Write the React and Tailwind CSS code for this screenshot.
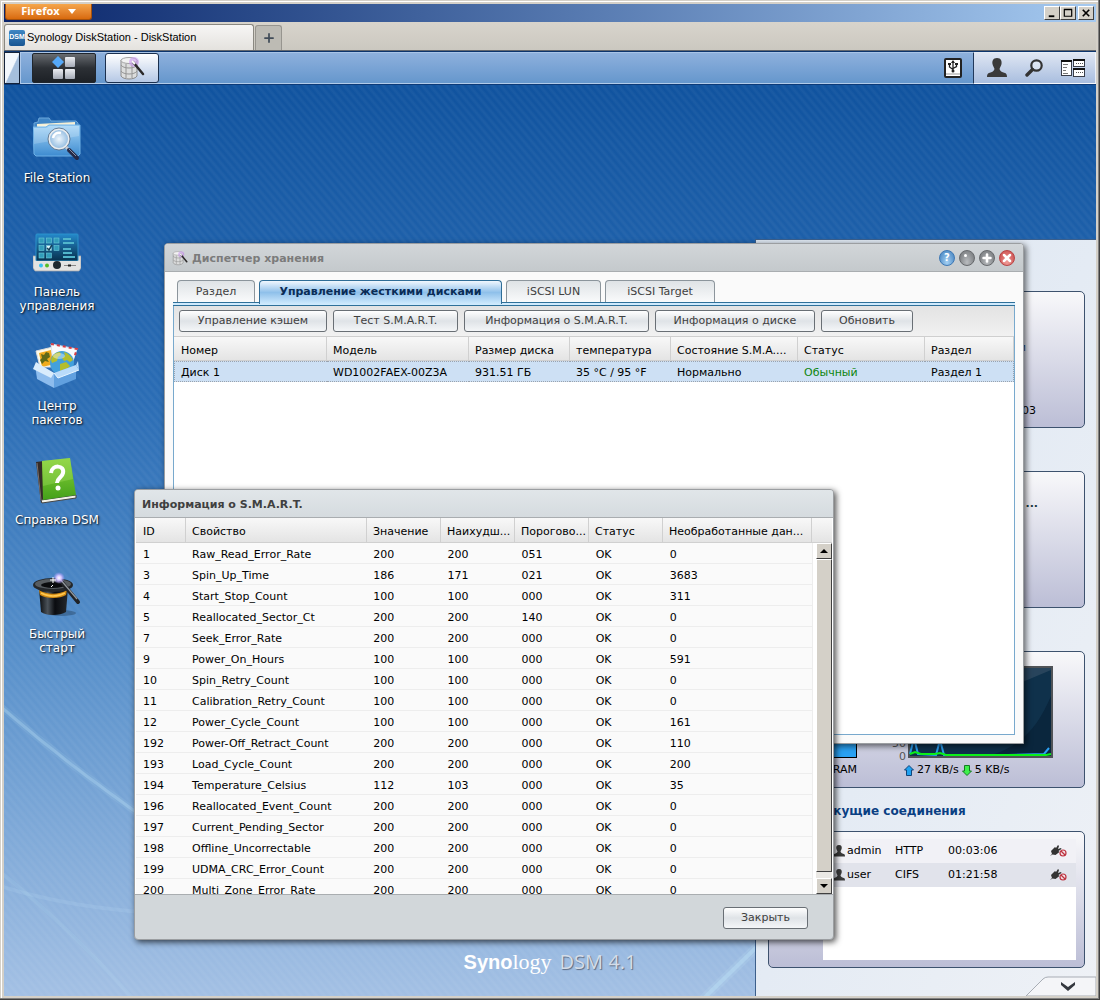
import React from 'react';
import { Plus, X } from 'lucide-react';

const apps = [
  { label: ['File Station'], icon: 'folder' },
  { label: ['Панель', 'управления'], icon: 'panel' },
  { label: ['Центр', 'пакетов'], icon: 'package' },
  { label: ['Справка DSM'], icon: 'help' },
  { label: ['Быстрый', 'старт'], icon: 'hat' },
];

const tabs = [
  { label: 'Раздел', width: 'w-[78px]' },
  { label: 'Управление жесткими дисками', width: 'w-[243px]', active: true },
  { label: 'iSCSI LUN', width: 'w-[95px]' },
  { label: 'iSCSI Target', width: 'w-[110px]' },
];

const actions = [
  { label: 'Управление кэшем', width: 'w-[148px]' },
  { label: 'Тест S.M.A.R.T.', width: 'w-[125px]' },
  { label: 'Информация о S.M.A.R.T.', width: 'w-[185px]' },
  { label: 'Информация о диске', width: 'w-[160px]' },
  { label: 'Обновить', width: 'w-[92px]' },
];

const diskColumns = [
  { label: 'Номер', width: 'w-[153px]' },
  { label: 'Модель', width: 'w-[142px]' },
  { label: 'Размер диска', width: 'w-[101px]' },
  { label: 'температура', width: 'w-[101px]' },
  { label: 'Состояние S.M.A....', width: 'w-[127px]' },
  { label: 'Статус', width: 'w-[127px]' },
  { label: 'Раздел', width: 'w-[89px]' },
];

const disk = ['Диск 1', 'WD1002FAEX-00Z3A', '931.51 ГБ', '35 °C / 95 °F', 'Нормально', 'Обычный', 'Раздел 1'];

const smartColumns = [
  { label: 'ID', width: 'w-[50px]' },
  { label: 'Свойство', width: 'w-[181px]' },
  { label: 'Значение', width: 'w-[74px]' },
  { label: 'Наихудш...', width: 'w-[74px]' },
  { label: 'Порогово...', width: 'w-[74px]' },
  { label: 'Статус', width: 'w-[74px]' },
  { label: 'Необработанные дан...', width: 'w-[149px]' },
];

const smartRows = [
  ['1', 'Raw_Read_Error_Rate', '200', '200', '051', 'OK', '0'],
  ['3', 'Spin_Up_Time', '186', '171', '021', 'OK', '3683'],
  ['4', 'Start_Stop_Count', '100', '100', '000', 'OK', '311'],
  ['5', 'Reallocated_Sector_Ct', '200', '200', '140', 'OK', '0'],
  ['7', 'Seek_Error_Rate', '200', '200', '000', 'OK', '0'],
  ['9', 'Power_On_Hours', '100', '100', '000', 'OK', '591'],
  ['10', 'Spin_Retry_Count', '100', '100', '000', 'OK', '0'],
  ['11', 'Calibration_Retry_Count', '100', '100', '000', 'OK', '0'],
  ['12', 'Power_Cycle_Count', '100', '100', '000', 'OK', '161'],
  ['192', 'Power-Off_Retract_Count', '200', '200', '000', 'OK', '110'],
  ['193', 'Load_Cycle_Count', '200', '200', '000', 'OK', '200'],
  ['194', 'Temperature_Celsius', '112', '103', '000', 'OK', '35'],
  ['196', 'Reallocated_Event_Count', '200', '200', '000', 'OK', '0'],
  ['197', 'Current_Pending_Sector', '200', '200', '000', 'OK', '0'],
  ['198', 'Offline_Uncorrectable', '200', '200', '000', 'OK', '0'],
  ['199', 'UDMA_CRC_Error_Count', '200', '200', '000', 'OK', '0'],
  ['200', 'Multi_Zone_Error_Rate', '200', '200', '000', 'OK', '0'],
];

const connections = [
  { user: 'admin', type: 'HTTP', time: '00:03:06' },
  { user: 'user', type: 'CIFS', time: '01:21:58' },
];

const FolderIcon = () => (
  <svg viewBox="0 0 48 48" className="size-12">
    <defs>
      <linearGradient id="folder" x1="0" y1="0" x2="0" y2="1">
        <stop offset="0" stopColor="#a6d6f8" />
        <stop offset="1" stopColor="#3d8bd0" />
      </linearGradient>
      <radialGradient id="lens">
        <stop offset="0" stopColor="#eef6fc" />
        <stop offset="1" stopColor="#8fbae0" />
      </radialGradient>
    </defs>
    <path d="M1 13V8l4-1 1-4h10l2 3h25l2 2v6H1z" fill="#4186c6" stroke="#6aa6da" />
    <path d="M4 9l38-2v6H4z" fill="#f6f0d5" />
    <path d="M5 11l37-2v4H5z" fill="#fffdf0" />
    <path d="M0 12h13l3-2h31v29l-2 2H3l-2-2z" fill="url(#folder)" stroke="#6eb1e6" />
    <path d="M1 13h13l3-2h29v10L1 29z" fill="#fff" opacity=".18" />
    <circle cx="26" cy="24" r="10" fill="url(#lens)" stroke="#e8ecef" strokeWidth="2" />
    <circle cx="26" cy="24" r="11" fill="none" stroke="#4d6580" strokeWidth="0.8" />
    <path d="M20 23c1-4 4-6 8-5" stroke="#fff" strokeWidth="2.500" fill="none" />
    <path d="M33 32l4 4" stroke="#c9ced4" strokeWidth="3" />
    <path d="M36 35l8 8" stroke="#252a48" strokeWidth="4" strokeLinecap="round" />
    <path d="M36 34l7 7" stroke="#8c93a8" strokeWidth="1" />
  </svg>
);

const PanelIcon = () => (
  <svg viewBox="0 0 48 48" className="size-12">
    <defs>
      <linearGradient id="screen" x1="0" y1="0" x2="0" y2="1">
        <stop offset="0" stopColor="#2489cb" />
        <stop offset="1" stopColor="#07304d" />
      </linearGradient>
    </defs>
    <path d="M0 27h4v3h40v-3h4v12l-2 3H2l-2-3z" fill="#dcdcdc" stroke="#aaa" strokeWidth="0.7" />
    <rect x="3" y="5" width="42" height="27" rx="1" fill="url(#screen)" stroke="#2b92cb" />
    <g fill="#329dbb" stroke="#6cc9d8" strokeWidth="0.6">
      <rect x="6" y="9" width="5" height="5" />
      <rect x="13.500" y="9" width="5" height="5" />
      <rect x="21" y="9" width="5" height="5" />
      <rect x="6" y="16.500" width="5" height="5" />
      <rect x="13.500" y="16.500" width="5" height="5" fill="#d8f4fa" />
      <rect x="21" y="16.500" width="5" height="5" />
      <rect x="6" y="24" width="5" height="5" />
      <rect x="13.500" y="24" width="5" height="5" />
    </g>
    <path d="M14 19l2 2 3-5" stroke="#17415a" strokeWidth="1.500" fill="none" />
    <path d="M30 10h8M30 14h11M30 20h8M30 24h9M30 28h12" stroke="#51b5cb" strokeWidth="2" />
    <path d="M1 32h46v7l-2 2H3l-2-2z" fill="#e3e3e3" />
    <circle cx="8" cy="36.500" r="2" fill="#35c1f1" />
    <circle cx="14" cy="36.500" r="2" fill="#55bd28" />
    <circle cx="24" cy="36" r="4" fill="#1e2830" />
    <path d="M31 36.500h12" stroke="#888" />
    <path d="M35 36.500h3" stroke="#222" strokeWidth="2" />
  </svg>
);

const PackageIcon = () => (
  <svg viewBox="0 0 48 48" className="size-12">
    <path d="M3 8l17-4 4 20H7z" fill="#fffbe8" stroke="#ddd" />
    <path d="M6 10l12-3 4 14-13 3z" fill="#f0ab1c" />
    <path d="M8 11l3 1 2-3 3 1 1 4-3 2 2 3-4-1-3 3-2-4 2-2z" fill="#5f6a17" />
    <path d="M18 1l26 5-6 18-18-3z" fill="#f9fafc" stroke="#dee3ee" />
    <path d="M18 1l26 5-3 9" fill="none" stroke="#d73d45" strokeWidth="2" strokeDasharray="3 3" />
    <circle cx="29" cy="20" r="12" fill="#43a0dc" />
    <path d="M18 17c1-5 5-8 9-8l1 3-3 2-1 4-5 2zM31 9c4 1 7 4 9 8l-3 2-3-2-3 1-2-3 3-2zM27 21l6-2 4 4-4 4-6 2z" fill="#b3bd2d" />
    <ellipse cx="26" cy="13" rx="6" ry="3" fill="#fff" opacity=".4" />
    <path d="M2 21l19 9v15L4 36z" fill="#8dbced" />
    <path d="M21 30l22-8v14L21 45z" fill="#61a0df" />
    <path d="M3 19l-3 7 18 9 3-5z" fill="#d9ecfc" />
    <path d="M21 30l22-8 3 5-21 8z" fill="#b9dbfa" />
    <path d="M21 30l4 5 21-8" fill="none" stroke="#e8f5ff" />
    <path d="M43 22l2-4 1 9" fill="#b9dbfa" />
  </svg>
);

const HelpIcon = () => (
  <svg viewBox="0 0 48 48" className="size-12">
    <defs>
      <linearGradient id="book" x1="0" y1="0" x2="0" y2="1">
        <stop offset="0" stopColor="#8bd33b" />
        <stop offset="1" stopColor="#43a019" />
      </linearGradient>
    </defs>
    <path d="M3 5l8-1 3 39-6 3z" fill="#332b29" />
    <path d="M4 6l4 37" stroke="#7b716d" />
    <path d="M8 43l35-5v3L9 46z" fill="#f2f2e8" stroke="#444" />
    <path d="M9 4l28-3 6 37-33 5z" fill="url(#book)" />
    <path d="M9 4l28-3 3 21-30 7z" fill="#a5df63" opacity=".35" />
    <path d="M18 16c1-9 14-8 12 0-1 5-6 5-6 10" stroke="#fff" strokeWidth="4" fill="none" />
    <circle cx="25" cy="31" r="2.500" fill="#fff" />
  </svg>
);

const HatIcon = () => (
  <svg viewBox="0 0 48 48" className="size-12">
    <defs>
      <linearGradient id="hat">
        <stop offset="0" stopColor="#080a0d" />
        <stop offset=".3" stopColor="#4b5259" />
        <stop offset=".55" stopColor="#0a0c10" />
        <stop offset="1" stopColor="#25292e" />
      </linearGradient>
      <radialGradient id="spark">
        <stop offset="0" stopColor="#fff" />
        <stop offset=".4" stopColor="#d5c5ff" />
        <stop offset="1" stopColor="#a995ff" stopOpacity="0" />
      </radialGradient>
    </defs>
    <ellipse cx="28" cy="42" rx="15" ry="3" fill="#123" opacity=".3" />
    <path d="M6 17h29l-2 24c-6 4-20 4-25 0z" fill="url(#hat)" />
    <path d="M6 19c8 5 20 5 28 0l-1 5c-6 4-20 4-26 0z" fill="#d18a14" />
    <path d="M8 22c7 4 17 4 24 0" stroke="#ffc74e" strokeWidth="1.500" fill="none" />
    <ellipse cx="20" cy="14" rx="20" ry="7" fill="#25282b" />
    <ellipse cx="20" cy="13" rx="18" ry="5" fill="#575c60" />
    <ellipse cx="20" cy="14" rx="12" ry="3" fill="#0b0c0e" />
    <path d="M27 9l18 22" stroke="#202226" strokeWidth="4" strokeLinecap="round" />
    <path d="M27 8l17 20" stroke="#92989d" strokeWidth="1.300" />
    <circle cx="26" cy="7" r="6" fill="url(#spark)" />
    <path d="M20 6v6M17 9h6M18 16l2-2" stroke="#fff" />
  </svg>
);

const appIcons = { folder: FolderIcon, panel: PanelIcon, package: PackageIcon, help: HelpIcon, hat: HatIcon };

const DiskWandIcon = ({ className }) => (
  <svg viewBox="0 0 26 24" className={className}>
    <path d="M2 4v16c2 4 14 4 16 0V4z" fill="#dcdddd" stroke="#8b8b8b" />
    <ellipse cx="10" cy="4.500" rx="8" ry="3" fill="#f2f2f2" stroke="#a4a4a4" />
    <path d="M2 9c2 4 14 4 16 0M2 15c2 4 14 4 16 0M7 8v14M13 8v14" fill="none" stroke="#949494" />
    <circle cx="15" cy="6" r="5" fill="#cc99f0" opacity=".6" />
    <path d="M14 6l10 12" stroke="#2b2929" strokeWidth="2.500" strokeLinecap="round" />
    <path d="M13 5l3 3" stroke="#fff" strokeWidth="2" />
  </svg>
);

const UserIcon = ({ className }) => (
  <svg viewBox="0 0 20 20" className={className}>
    <path d="M10 0c4 0 5 3 4.500 6-.3 2-1.500 3-2 5 .5 2 2 3 5.500 4 1.500.5 2 2 2 4H0c0-2 .5-3.500 2-4 3.500-1 5-2 5.500-4-.5-2-1.700-3-2-5C5 3 6 0 10 0z" fill="#3a3a3a" />
  </svg>
);

const SearchIcon = () => (
  <svg viewBox="0 0 18 18" className="size-[18px]">
    <circle cx="11.500" cy="6.500" r="5.200" fill="#fff" fillOpacity=".35" stroke="#333" strokeWidth="2.200" />
    <path d="M7.500 10.500L2 16" stroke="#333" strokeWidth="3.400" strokeLinecap="round" />
  </svg>
);

const UsbIcon = () => (
  <svg viewBox="0 0 18 20" className="h-5 w-[18px]">
    <rect x="1" y="1" width="16" height="18" rx="1" fill="#fff" stroke="#222" strokeWidth="2" />
    <path d="M2 16h14" stroke="#999" />
    <path d="M9 3v11M5.500 6v3L9 11.500M12.500 6v2.500L9 10.500" stroke="#222" strokeWidth="1.300" fill="none" />
    <path d="M7 5l2-3 2 3zM4 5h3v2H4zM11 5h3v2h-3z" fill="#222" />
    <circle cx="9" cy="13" r="1.500" fill="#222" />
  </svg>
);

const WidgetsIcon = () => (
  <svg viewBox="0 0 24 18" className="h-[18px] w-6">
    <g fill="#fff" stroke="#3a3f4a">
      <rect x=".5" y="1.500" width="10" height="15" />
      <rect x="12.500" y=".5" width="11" height="7" />
      <rect x="12.500" y="9.500" width="11" height="8" />
    </g>
    <path d="M0 2h11M12 1h12M12 10h12" stroke="#111" strokeWidth="2" />
    <path d="M2 5.500h5M2 8.500h4M2 11.500h3M2 14.500h5" stroke="#777" />
    <path d="M15 4.500h7M15 13.500h7" stroke="#555" strokeDasharray="1 1" />
  </svg>
);

const PlugIcon = () => (
  <svg viewBox="0 0 17 12" className="h-3 w-[17px]">
    <path d="M0 11l2-2-1-3 4-4 1 1 2-3 1 1-1 3 3-1 .5 1-3 2 1 1-4 3-3-.5z" fill="#333" />
    <circle cx="13" cy="8" r="3" fill="#f3e1e5" stroke="#bd3340" strokeWidth="1.200" />
    <path d="M11 6l4 4" stroke="#bd3340" strokeWidth="1.200" />
  </svg>
);

const BrowserChrome = () => (
  <header>
    <div className="flex h-[18px] items-start justify-between bg-linear-to-r from-[#0a246a] to-[#a6caf0]">
      <button className="ml-px flex h-4 w-[87px] items-center justify-center gap-2 rounded-b-[3px] border border-t-0 border-[#a4500d] bg-linear-to-b from-[#f5a64a] to-[#d86a0a] font-['Open_Sans',sans-serif] text-[11px] font-bold text-white">
        Firefox
        <svg viewBox="0 0 8 5" className="h-[5px] w-2"><path d="M0 0h8L4 5z" fill="#fff" /></svg>
      </button>
      <div className="flex pt-[2px] pr-[2px]">
        <ChromeButton label="Свернуть"><path d="M3 9h6v2H3z" fill="#000" /></ChromeButton>
        <ChromeButton label="Развернуть"><path d="M2.500 3v7h8V3zM2 2.500h9" fill="none" stroke="#000" strokeWidth="1.300" /></ChromeButton>
        <span className="w-[2px]" />
        <ChromeButton label="Выход"><path d="M3 3l7 7M10 3l-7 7" stroke="#000" strokeWidth="1.800" /></ChromeButton>
      </div>
    </div>
    <div className="flex h-[29px] items-end border-b border-[#63676d] bg-linear-to-b from-[#d8d4cc] to-[#cbc8c0]">
      <div className="flex h-[26px] w-[250px] items-center gap-[2px] rounded-t-[3px] border border-b-0 border-[#8a8881] bg-linear-to-b from-[#f7f6f5] to-[#e4e2de] pl-1 font-['Liberation_Sans',sans-serif] text-[11px] text-black">
        <span className="flex size-4 items-center justify-center rounded-[2px] bg-linear-to-b from-[#3f87c4] to-[#175592] text-[7px] font-bold text-white">DSM</span>
        Synology DiskStation - DiskStation
      </div>
      <button aria-label="Новая вкладка" className="ml-px flex h-[25px] w-[27px] items-center justify-center rounded-t-[3px] border border-b-0 border-[#97958f] bg-[#bdbbb4]">
        <Plus className="size-[14px] text-[#414c58]" strokeWidth={3} />
      </button>
    </div>
  </header>
);

const ChromeButton = ({ label, children }) => (
  <button aria-label={label} className="flex h-[14px] w-4 items-center justify-center border border-t-white border-r-[#404040] border-b-[#404040] border-l-white bg-[#d4d0c8]">
    <svg viewBox="0 0 13 13" className="size-3">{children}</svg>
  </button>
);

const Taskbar = () => (
  <nav className="flex h-[34px] shrink-0 items-stretch border-y border-t-[#0c356d] border-b-[#0c3a78] bg-linear-to-b from-[#8fb1dd] to-[#6496cc] shadow-[inset_0_1px_0_#a9c4e6,inset_0_-1px_0_#b1cbe9]">
    <button aria-label="Рабочий стол" className="w-4 border border-[#15233a] bg-linear-to-br from-[#f3f7fc] from-50% to-[#a5bfdd] to-55%" />
    <span className="w-3 border-l border-[#adc8ea]" />
    <div className="flex items-center gap-[9px]">
      <button aria-label="Главное меню" className="flex h-[30px] w-16 items-center justify-center rounded-[2px] border border-[#20262d] bg-linear-to-b from-[#686c71] via-[#2c3035] to-[#1d2126]">
        <svg viewBox="0 0 24 24" className="size-6">
          <defs>
            <linearGradient id="tile" x1="0" y1="0" x2="0" y2="1">
              <stop offset="0" stopColor="#eceef2" />
              <stop offset="1" stopColor="#a4aab6" />
            </linearGradient>
          </defs>
          <path d="M6 0l6 6-6 6-6-6z" fill="#55a8f8" />
          <rect x="13" y="1" width="10" height="10" rx="1" fill="url(#tile)" />
          <rect x="1" y="13" width="10" height="10" rx="1" fill="url(#tile)" />
          <rect x="13" y="13" width="10" height="10" rx="1" fill="url(#tile)" />
        </svg>
      </button>
      <button aria-label="Диспетчер хранения" className="flex h-[30px] w-[54px] items-center justify-center rounded-[3px] border border-[#1b304e] bg-linear-to-b from-white to-[#b5c8e5]">
        <DiskWandIcon className="h-6 w-[26px]" />
      </button>
    </div>
    <div className="ml-auto flex items-center">
      <button aria-label="USB" className="mr-[11px]"><UsbIcon /></button>
      <div className="flex h-full w-[123px] items-center justify-between border border-l-[#21395c] border-white/70 bg-linear-to-b from-[#dfe6f3] to-[#a9bedf] pr-[10px] pl-[13px]">
        <button aria-label="Параметры"><UserIcon className="size-5" /></button>
        <button aria-label="Поиск"><SearchIcon /></button>
        <button aria-label="Виджеты"><WidgetsIcon /></button>
      </div>
    </div>
  </nav>
);

const DesktopIcon = ({ app }) => {
  const Icon = appIcons[app.icon];
  return (
    <li className="h-[114px]">
      <a href="#" className="flex flex-col items-center gap-2 text-center text-xs leading-[14px] text-white [text-shadow:1px_1px_2px_#000]">
        <Icon />
        <span>
          {app.label.map((line) => <span key={line} className="block">{line}</span>)}
        </span>
      </a>
    </li>
  );
};

const WidgetCard = ({ title, children }) => (
  <section>
    <h2 className="h-[43px] pt-[15px] pl-[49px] text-xs leading-4 font-bold text-[#0a3f83]">{title}</h2>
    <div className="h-[137px] rounded-[5px] border border-[#3d526e] bg-linear-to-b from-[#f8f8fa] to-[#bcbed6]">{children}</div>
  </section>
);

const Widgets = () => (
  <aside className="absolute top-[154px] right-0 bottom-0 w-[341px] overflow-hidden border-t border-l border-[#3c5f8b] bg-linear-to-br from-[#dce5f0] via-[#e4ebf4] to-[#eef1f6] text-[11px] text-black">
    <div className="flex flex-col pt-2 pr-[11px] pl-3">
      <WidgetCard>
        <div className="flex h-full flex-col items-end justify-between pt-12 pr-12 pb-2">
          <span className="pr-[10px] text-[#24436e]">и</span>
          <span>03</span>
        </div>
      </WidgetCard>
      <WidgetCard>
        <p className="pt-6 pr-[46px] text-right font-bold text-[#1d3a40]">...</p>
      </WidgetCard>
      <WidgetCard>
        <div className="flex items-end pt-[14px]">
          <div className="h-[89px] w-[88px] border border-black bg-[#2aa1f2]" />
          <div className="-mb-[5px] w-[51px] pr-[2px] text-right leading-[13px] text-[#555]">
            <div>50</div>
            <div>0</div>
          </div>
          <svg viewBox="0 0 145 92" className="h-[92px] w-[145px]">
            <rect width="145" height="92" fill="#505357" />
            <rect x="2" y="2" width="141" height="88" fill="#0f314b" />
            <path d="M2 2h141v2L100 22 2 50z" fill="#2e4a60" opacity=".8" />
            <path d="M143 30v60H80c35-10 50-30 63-60z" fill="#0a263d" />
            <path d="M2 88L6 72l4 16 18 1 4-15 4 15h64l36-1 5-6" fill="none" stroke="#2ba0f3" strokeWidth="2" />
            <path d="M2 88l5-2 6 2h14l5-1 6 2h100l5-1" fill="none" stroke="#0bf019" strokeWidth="2" />
          </svg>
        </div>
        <div className="flex items-center pt-1 leading-4">
          <span className="w-[88px] text-right">RAM</span>
          <div className="ml-[47px] flex items-center gap-[3px]">
            <svg viewBox="0 0 10 11" className="h-[11px] w-[10px]"><path d="M5 .5L9.500 5H7.500v5.500h-5V5H.5z" fill="#20a1f0" stroke="#124579" /></svg>
            <span>27 KB/s</span>
            <svg viewBox="0 0 10 11" className="h-[11px] w-[10px]"><path d="M5 10.500L.5 6h2V.5h5V6h2z" fill="#3ff04b" stroke="#157b23" /></svg>
            <span>5 KB/s</span>
          </div>
        </div>
      </WidgetCard>
      <WidgetCard title="Текущие соединения">
        <div className="mt-[7px] mr-2 ml-[54px] h-[121px] bg-white">
          <table className="w-full table-fixed border-collapse text-left">
            <tbody>
              {connections.map((item) => (
                <tr key={item.user} className="h-6 bg-[#f1f1f6] even:bg-[#e1e3eb]">
                  <td className="w-6 pl-[10px]"><UserIcon className="h-[14px] w-3" /></td>
                  <td className="w-12">{item.user}</td>
                  <td className="w-[53px]">{item.type}</td>
                  <td className="w-[102px]">{item.time}</td>
                  <td><button aria-label="Отключить" className="block"><PlugIcon /></button></td>
                </tr>
              ))}
            </tbody>
          </table>
        </div>
      </WidgetCard>
    </div>
    <button aria-label="Ещё" className="absolute right-0 bottom-0">
      <svg viewBox="0 0 70 20" className="h-5 w-[70px]">
        <path d="M0 20L17 3q2-2 5-2h48v19z" fill="#f4f5f8" stroke="#a8adb5" />
        <path d="M35 6l7 5 7-5v3l-7 6-7-6z" fill="#34383f" />
      </svg>
    </button>
  </aside>
);

const PushButton = ({ width, children }) => (
  <button className={`h-[22px] shrink-0 rounded-[3px] border border-[#696f75] bg-linear-to-b from-white via-[#dfe3e7] via-50% to-[#f4f6f8] pt-px text-[11px] whitespace-nowrap text-[#404040] ${width}`}>
    {children}
  </button>
);

const headCell = 'border-r border-b border-[#d0d0d0] bg-linear-to-b from-[#f8f8f8] to-[#e4e4e4] pt-1 pl-[6px] font-normal overflow-hidden whitespace-nowrap first:pl-[7px]';

const DiskTable = () => (
  <table className="w-full table-fixed border-separate border-spacing-0 text-left leading-4">
    <thead>
      <tr className="h-6">
        {diskColumns.map((col) => (
          <th key={col.label} className={`${headCell} ${col.width}`}>{col.label}</th>
        ))}
      </tr>
    </thead>
    <tbody>
      <tr className="h-[21px] bg-[#cde0f4]">
        {disk.map((value) => (
          <td key={value} className={`border-y border-dotted border-[#9aa3ae] pt-[2px] pl-[6px] whitespace-nowrap first:border-l last:border-r ${value === 'Обычный' ? 'text-[#0d850d]' : ''}`}>{value}</td>
        ))}
      </tr>
    </tbody>
  </table>
);

const Orb = ({ label, tone, children }) => (
  <button aria-label={label} className={`flex size-4 items-center justify-center rounded-full border bg-radial-[at_50%_80%] text-white ${tone}`}>
    {children}
  </button>
);

const StorageManager = () => (
  <section className="absolute top-[158px] left-[160px] flex h-[501px] w-[860px] flex-col rounded-t-[4px] border border-[#9b9ea1] bg-[#fafafa] text-[11px] text-black shadow-[2px_2px_6px_rgba(0,0,0,0.6)]">
    <header className="flex h-7 shrink-0 items-center gap-1 rounded-t-[3px] border-b border-[#a9adb0] bg-linear-to-b from-[#d2d6d9] to-[#c4c9cc] pr-2 pl-[7px]">
      <DiskWandIcon className="size-4" />
      <h1 className="pt-1 text-[11px] font-bold text-[#7b7b7b]">Диспетчер хранения</h1>
      <div className="ml-auto flex gap-1">
        <Orb label="Справка" tone="border-[#3d78b5] from-[#a5d1f4] to-[#3e7dbc]"><span className="text-[10px] font-bold">?</span></Orb>
        <Orb label="Свернуть" tone="border-[#66696c] from-[#b9bcbf] to-[#6e7174]"><span className="mr-1 mb-1 size-[3px] rounded-full bg-white" /></Orb>
        <Orb label="Развернуть" tone="border-[#66696c] from-[#b9bcbf] to-[#6e7174]"><Plus className="size-3" strokeWidth={5} /></Orb>
        <Orb label="Закрыть" tone="border-[#b94343] from-[#f09b97] to-[#c64646]"><X className="size-3" strokeWidth={5} /></Orb>
      </div>
    </header>
    <div className="flex grow flex-col px-2 pt-2 pb-2">
      <div role="tablist" className="flex h-[22px] items-end gap-1 pl-1">
        {tabs.map((tab) => (
          <button
            key={tab.label}
            role="tab"
            aria-selected={!!tab.active}
            className={tab.active
              ? `relative -mb-[2px] h-6 rounded-t-[4px] border border-b-0 border-[#2f6d97] bg-linear-to-b from-[#f0f7fe] via-[#8fc0ea] via-50% to-[#cfeafd] font-bold text-[#0a2c56] ${tab.width}`
              : `h-[22px] rounded-t-[4px] border border-b-0 border-[#8c959c] bg-linear-to-b from-[#dfe3e6] to-[#f9fafb] pt-px text-[#404040] ${tab.width}`}
          >
            {tab.label}
          </button>
        ))}
      </div>
      <div className="h-1 border-y border-[#2f7099] bg-[#cfeafd]" />
      <div role="tabpanel" className="grow border border-t-0 border-[#78a9cd] bg-white">
        <div className="flex h-[31px] items-center gap-[6px] border-b border-[#cfcfcf] bg-linear-to-b from-[#e3e3e3] to-[#f1f1f1] pl-[5px]">
          {actions.map((action) => <PushButton key={action.label} width={action.width}>{action.label}</PushButton>)}
        </div>
        <DiskTable />
      </div>
    </div>
  </section>
);

const ScrollButton = ({ label, path }) => (
  <button aria-label={label} className="flex h-4 w-full shrink-0 items-center justify-center border border-t-white border-r-[#404040] border-b-[#404040] border-l-white bg-[#d4d0c8]">
    <svg viewBox="0 0 8 4" className="h-1 w-2"><path d={path} /></svg>
  </button>
);

const SmartDialog = () => (
  <section role="dialog" aria-labelledby="smart-title" className="absolute top-[404px] left-[130px] flex h-[451px] w-[700px] flex-col rounded-[4px] border border-[#9b9ea1] bg-[#d2d7da] text-[11px] text-black shadow-[2px_2px_6px_rgba(0,0,0,0.7)]">
    <h2 id="smart-title" className="flex h-7 shrink-0 items-center rounded-t-[3px] border-b border-[#a9adb0] bg-linear-to-b from-[#e1e6e9] to-[#d5dbdf] pt-1 pl-[7px] text-[11px] font-bold text-[#404040]">
      Информация о S.M.A.R.T.
    </h2>
    <div className="flex min-h-0 grow flex-col border-b border-[#a9adb0] bg-white px-px leading-4">
      <table className="w-full table-fixed border-separate border-spacing-0 text-left">
        <thead>
          <tr className="h-[25px]">
            {smartColumns.map((col) => (
              <th key={col.label} className={`${headCell} ${col.width}`}>{col.label}</th>
            ))}
            <th className="border-b border-[#d0d0d0] bg-linear-to-b from-[#f8f8f8] to-[#e4e4e4]" />
          </tr>
        </thead>
      </table>
      <div className="flex min-h-0 grow">
        <div className="w-[677px] overflow-hidden">
          <table className="w-full table-fixed border-separate border-spacing-0 text-left">
            <tbody>
              {smartRows.map((row) => (
                <tr key={row[0]} className="h-[21px] bg-[#fafafa]">
                  {row.map((value, i) => (
                    <td key={i} className={`border-b border-[#ededed] pt-[3px] pl-[6px] whitespace-nowrap first:pl-[7px] last:border-r ${smartColumns[i].width}`}>{value}</td>
                  ))}
                </tr>
              ))}
            </tbody>
          </table>
        </div>
        <div className="ml-auto flex w-4 flex-col bg-[#eae8e4]">
          <ScrollButton label="Вверх" path="M4 0l4 4H0z" />
          <div className="mb-[6px] grow border border-t-white border-r-[#404040] border-b-[#404040] border-l-white bg-[#d4d0c8]" />
          <ScrollButton label="Вниз" path="M0 0h8L4 4z" />
        </div>
      </div>
    </div>
    <footer className="flex h-11 shrink-0 items-center justify-end pt-px pr-[25px]">
      <PushButton width="w-[85px]">Закрыть</PushButton>
    </footer>
  </section>
);

const Wallpaper = () => (
  <svg viewBox="0 0 1092 911" preserveAspectRatio="none" className="absolute inset-0 size-full">
    <defs>
      <pattern id="stripes" width="6" height="6" patternUnits="userSpaceOnUse" patternTransform="rotate(-40)">
        <path d="M2 0v6" stroke="#fff" strokeWidth="3" opacity=".04" />
      </pattern>
    </defs>
    <rect width="1092" height="911" fill="url(#stripes)" />
    <g fill="none" stroke="#bfe3f7" strokeLinecap="round">
      <path d="M-4 621C50 668 90 697 150 740" strokeWidth="7" opacity=".12" />
      <path d="M-4 621C50 668 90 697 150 740" strokeWidth="3" opacity=".3" />
      <path d="M-4 801C40 815 90 824 150 828" strokeWidth="4" opacity=".16" />
      <path d="M0 790C50 830 90 870 130 915" strokeWidth="4" opacity=".12" />
      <path d="M695 918L760 855" strokeWidth="9" opacity=".2" />
      <path d="M695 918L760 855" strokeWidth="4" opacity=".4" />
    </g>
  </svg>
);

const App = () => {
  return (
    <div className="flex h-screen min-h-[1000px] flex-col bg-[#d4d0c8] p-1 font-['DejaVu_Sans',sans-serif] shadow-[inset_-1px_-1px_0_#404040,inset_-2px_-2px_0_#808080,inset_1px_1px_0_#d4d0c8,inset_2px_2px_0_#fff]">
      <BrowserChrome />
      <Taskbar />
      <main className="relative grow overflow-hidden bg-[linear-gradient(#10539f,#2b6db5_35%,#568fca_62%,#a3c0e4)]">
        <Wallpaper />
        <ul className="relative w-[106px] pt-[30px]">
          {apps.map((app) => <DesktopIcon key={app.icon} app={app} />)}
        </ul>
        <div className="absolute inset-x-0 bottom-5 flex items-baseline justify-center gap-2 text-white">
          <span className="font-['Liberation_Sans',sans-serif] text-xl leading-7 font-bold">
            Syno<span className="font-['Liberation_Serif',serif] text-[22px] font-normal">logy</span>
          </span>
          <span className="font-['Open_Sans',sans-serif] text-xl leading-7 text-[#d5dde8] [text-shadow:1px_1px_1px_#5c6b80]">DSM 4.1</span>
        </div>
        <Widgets />
        <StorageManager />
        <SmartDialog />
      </main>
    </div>
  );
};

export default App;
